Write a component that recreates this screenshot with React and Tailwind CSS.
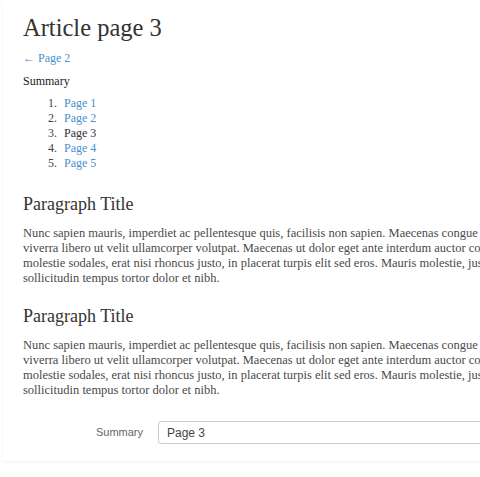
export default function App() {
    const serif = { fontFamily: '"Liberation Serif", "Times New Roman", serif' };

    const pages = [
        { n: 1, label: "Page 1", link: true },
        { n: 2, label: "Page 2", link: true },
        { n: 3, label: "Page 3", link: false },
        { n: 4, label: "Page 4", link: true },
        { n: 5, label: "Page 5", link: true },
    ];

    const lines = [
        "Nunc sapien mauris, imperdiet ac pellentesque quis, facilisis non sapien. Maecenas congue",
        "viverra libero ut velit ullamcorper volutpat. Maecenas ut dolor eget ante interdum auctor consequat",
        "molestie sodales, erat nisi rhoncus justo, in placerat turpis elit sed eros. Mauris molestie, justo",
        "sollicitudin tempus tortor dolor et nibh.",
    ];

    function renderSection() {
        return (
            <>
                <h2 className="text-[18px] leading-6 text-[#333]">Paragraph Title</h2>
                <p className="mt-[10px] text-[12.5px] leading-[15px] text-[#4a4a4a] whitespace-nowrap">
                    {lines.map((l, i) => (
                        <span key={i} className="block">{l}</span>
                    ))}
                </p>
            </>
        );
    }

    return (
        <div className="min-h-screen w-full overflow-hidden bg-white">
            <div
                className="ml-[3px] w-[720px] bg-white pl-5 pt-3 pb-[17px] shadow-[0_1px_3px_rgba(0,0,0,0.06)]"
                style={serif}
            >
                {/* Header */}
                <h1 className="text-[24.5px] leading-8 text-[#333]">Article page 3</h1>
                <a href="#" className="mt-[7px] block text-[12px] leading-[15px] text-[#4a8fcf]">
                    ← Page 2
                </a>

                {/* Summary */}
                <div className="mt-2 text-[12px] leading-[15px] text-[#222]">Summary</div>
                <ol className="mt-[7px] text-[12px] leading-[15px]">
                    {pages.map(p => (
                        <li key={p.n} className="flex">
                            <span className="w-[37px] pr-[3px] text-right text-[#444]">{p.n}.</span>
                            <span className={p.link ? "ml-[4px] text-[#4a8fcf]" : "ml-[4px] text-[#333]"}>
                                {p.label}
                            </span>
                        </li>
                    ))}
                </ol>

                <div className="mt-[21px]">{renderSection()}</div>
                <div className="mt-[18px]">{renderSection()}</div>

                {/* Form */}
                <div className="mt-[23px] flex items-center gap-[15px]" style={{ fontFamily: '"Liberation Sans", Arial, sans-serif' }}>
                    <label className="w-[120px] text-right text-[11px] text-[#666]">Summary</label>
                    <input
                        readOnly
                        value="Page 3"
                        className="h-[23px] w-[500px] rounded-[3px] border border-[#ccc] bg-white px-2 text-[12px] text-[#444] outline-none"
                    />
                </div>
            </div>
        </div>
    );
}
